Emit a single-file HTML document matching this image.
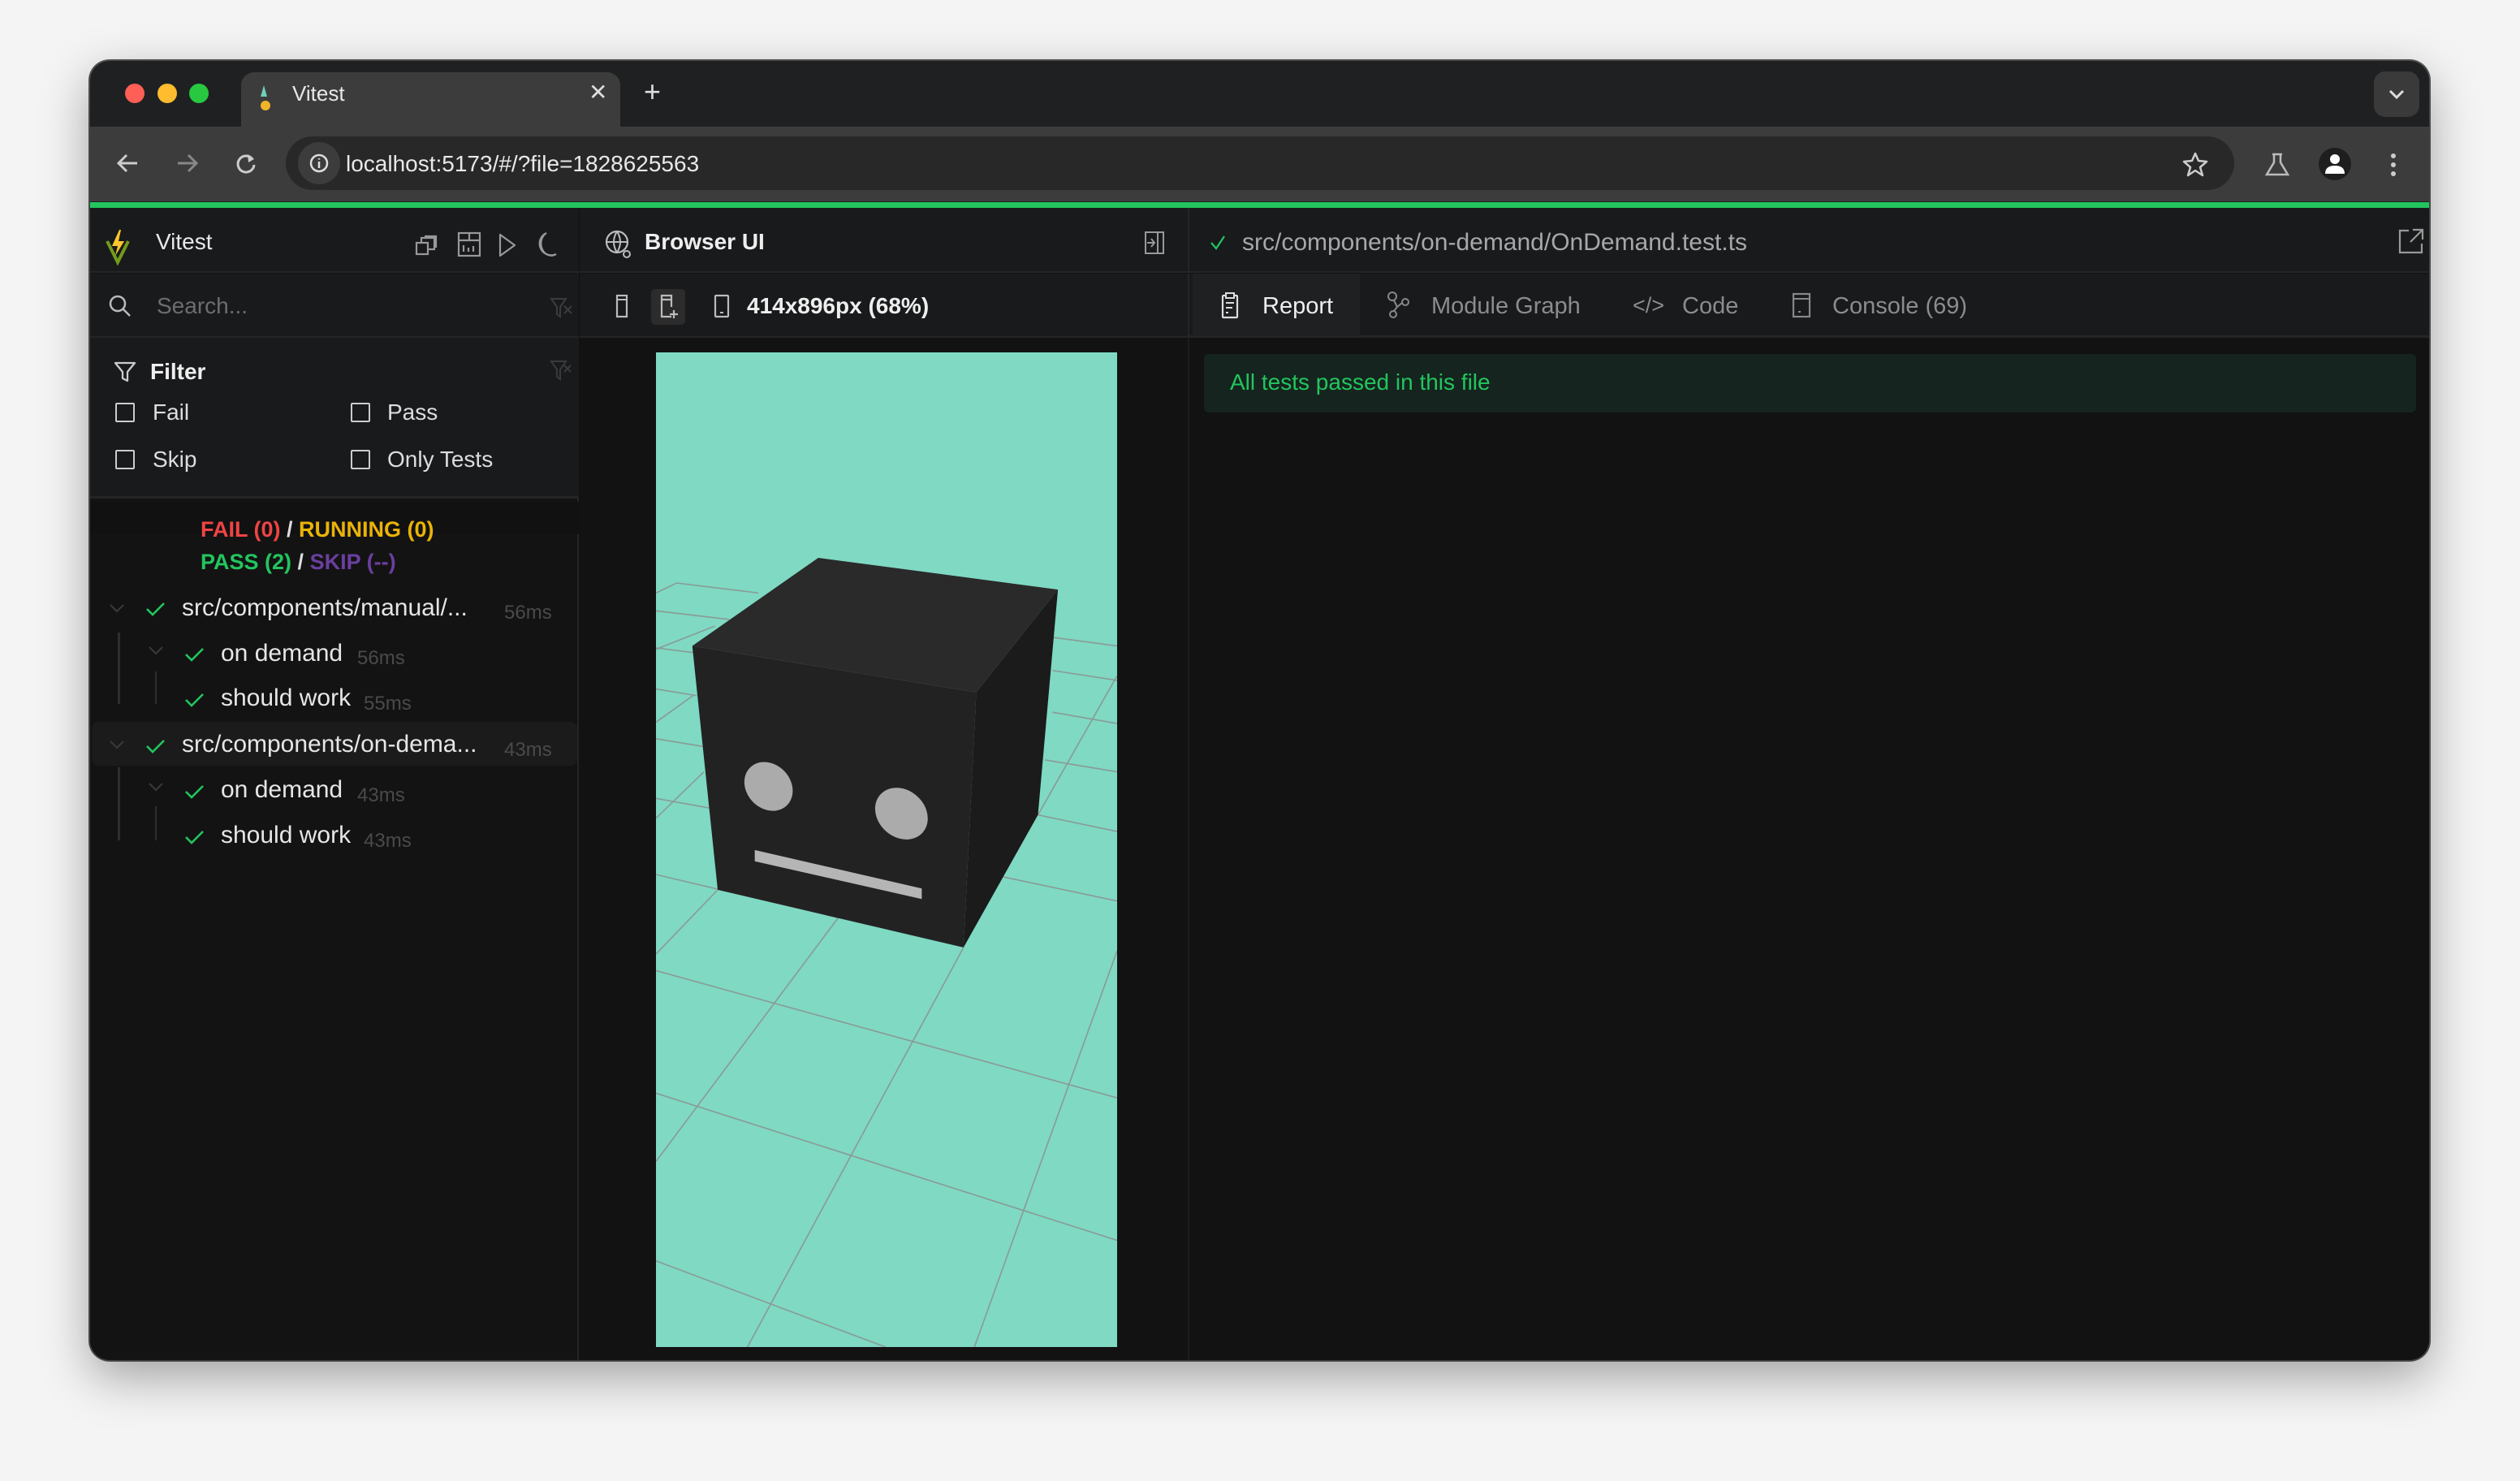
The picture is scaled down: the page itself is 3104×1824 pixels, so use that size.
<!DOCTYPE html>
<html><head><meta charset="utf-8">
<style>
*{box-sizing:border-box;margin:0;padding:0}
html,body{width:3104px;height:1824px;overflow:hidden;background:#f4f4f4;font-family:"Liberation Sans",sans-serif}
.a{position:absolute}
.win{left:111px;top:75px;width:2881px;height:1600px;border-radius:24px;background:#1f2021;overflow:hidden;box-shadow:0 20px 60px rgba(0,0,0,.35),0 0 0 2px #555}
.t{position:absolute;white-space:nowrap;line-height:1}
svg.i{position:absolute;overflow:visible}
.cb{position:absolute;width:24px;height:24px;border:2.5px solid #ccc;border-radius:2px}
</style></head><body>
<div class="a win">
  <div class="a" style="left:43px;top:28px;width:24px;height:24px;border-radius:50%;background:#fe5f57"></div>
  <div class="a" style="left:83px;top:28px;width:24px;height:24px;border-radius:50%;background:#febc2e"></div>
  <div class="a" style="left:122px;top:28px;width:24px;height:24px;border-radius:50%;background:#28c840"></div>
  <div class="a" style="left:186px;top:14px;width:467px;height:70px;background:#3c3c3c;border-radius:16px 16px 0 0"></div>
  <svg class="i" style="left:208px;top:30px" width="20" height="36"><path d="M6 0 L10 14 L2 14Z" fill="#6fd0b5"/><circle cx="8" cy="25" r="6" fill="#f0b429"/></svg>
  <div class="t" style="left:249px;top:27px;font-size:26px;color:#e8e8e8">Vitest</div>
  <div class="t" style="left:614px;top:25px;font-size:28px;color:#ddd">✕</div>
  <div class="t" style="left:682px;top:20px;font-size:36px;color:#ddd">+</div>
  <div class="a" style="left:2813px;top:13px;width:56px;height:56px;border-radius:14px;background:#3a3a3a"></div>
  <svg class="i" style="left:2831px;top:35px" width="20" height="12"><path d="M2 2 L10 10 L18 2" fill="none" stroke="#ddd" stroke-width="3"/></svg>
  <div class="a" style="left:0;top:81px;width:2881px;height:92px;background:#3c3c3c"></div>
  <svg class="i" style="left:32px;top:113px" width="28" height="26"><path d="M26 13 H3 M13 3 L3 13 L13 23" fill="none" stroke="#ccc" stroke-width="3"/></svg>
  <svg class="i" style="left:106px;top:113px" width="28" height="26"><path d="M2 13 H25 M15 3 L25 13 L15 23" fill="none" stroke="#888" stroke-width="3"/></svg>
  <svg class="i" style="left:178px;top:113px" width="28" height="28"><path d="M22 8 A10 10 0 1 0 24 15" fill="none" stroke="#ccc" stroke-width="3"/><path d="M16 2 L24 8 L17 12Z" fill="#ccc"/></svg>
  <div class="a" style="left:241px;top:93px;width:2400px;height:66px;border-radius:33px;background:#282828"></div>
  <div class="a" style="left:256px;top:100px;width:52px;height:52px;border-radius:50%;background:#3c3c3c"></div>
  <svg class="i" style="left:270px;top:114px" width="24" height="24"><circle cx="12" cy="12" r="10" fill="none" stroke="#ddd" stroke-width="2.5"/><path d="M12 10 V18 M12 6 V7.5" stroke="#ddd" stroke-width="2.5"/></svg>
  <div class="t" style="left:315px;top:113px;font-size:28px;color:#e8e8e8">localhost:5173/#/?file=1828625563</div>
  <svg class="i" style="left:2577px;top:112px" width="32" height="30"><path d="M16 2 L20 11 L30 12 L22 19 L25 29 L16 23 L7 29 L10 19 L2 12 L12 11Z" fill="none" stroke="#ccc" stroke-width="2.5" stroke-linejoin="round"/></svg>
  <svg class="i" style="left:2679px;top:113px" width="30" height="30"><path d="M9 2 H21 M11 2 V12 L2 27 H28 L19 12 V2" fill="none" stroke="#bbb" stroke-width="2.5"/></svg>
  <div class="a" style="left:2745px;top:107px;width:40px;height:40px;border-radius:50%;background:#1e1e1e"></div>
  <svg class="i" style="left:2752px;top:113px" width="26" height="28"><circle cx="13" cy="8" r="6" fill="#fff"/><path d="M1 26 Q1 16 13 16 Q25 16 25 26Z" fill="#fff"/></svg>
  <svg class="i" style="left:2832px;top:113px" width="10" height="30"><circle cx="5" cy="4" r="3" fill="#ccc"/><circle cx="5" cy="15" r="3" fill="#ccc"/><circle cx="5" cy="26" r="3" fill="#ccc"/></svg>
  <div class="a" style="left:0;top:174px;width:2881px;height:7px;background:#22c55e"></div>
  <div class="a" style="left:0;top:181px;width:2881px;height:1419px;background:#121212"></div>
  <!-- sidebar -->
  <div class="a" style="left:0;top:181px;width:602px;height:1419px;background:#131313;border-right:2px solid #242424"></div>
  <div class="a" style="left:0;top:181px;width:602px;height:80px;background:#191a1c;border-bottom:2px solid #252525"></div>
  <div class="a" style="left:0;top:262px;width:602px;height:79px;background:#191a1c;border-bottom:2px solid #252525"></div>
  <div class="a" style="left:0;top:341px;width:602px;height:198px;background:#191a1c;border-bottom:3px solid #252525"></div>
  <svg class="i" style="left:19px;top:206px" width="30" height="44"><path d="M2 16 L15 42 L28 16" fill="none" stroke="#729b1b" stroke-width="4"/><path d="M17 2 L8 22 H15 L12 34 L23 16 H16 L19 2Z" fill="#fcc72b"/></svg>
  <div class="t" style="left:81px;top:209px;font-size:28px;color:#e8e8e8">Vitest</div>
  <svg class="i" style="left:400px;top:212px" width="30" height="30"><rect x="2" y="12" width="14" height="14" fill="none" stroke="#999" stroke-width="2.2"/><path d="M8 12 V6 H24 V20 H16 M12 4 H26 V18" fill="none" stroke="#999" stroke-width="2.2"/></svg>
  <svg class="i" style="left:452px;top:210px" width="30" height="32"><rect x="2" y="2" width="26" height="28" fill="none" stroke="#999" stroke-width="2.2"/><path d="M2 11 H28 M15 2 V11 M8 17 V25 M14 20 V25 M20 18 V25" fill="none" stroke="#999" stroke-width="2.2"/></svg>
  <svg class="i" style="left:503px;top:212px" width="22" height="30"><path d="M2 2 L20 15 L2 28Z" fill="none" stroke="#999" stroke-width="2.2" stroke-linejoin="round"/></svg>
  <svg class="i" style="left:548px;top:210px" width="28" height="32"><path d="M14 2 A14 14 0 1 0 26 28 A12 14 0 0 1 14 2Z" fill="none" stroke="#999" stroke-width="2.2"/></svg>
  <svg class="i" style="left:22px;top:287px" width="30" height="30"><circle cx="12" cy="12" r="9" fill="none" stroke="#bbb" stroke-width="2.5"/><path d="M19 19 L27 27" stroke="#bbb" stroke-width="2.5"/></svg>
  <div class="t" style="left:82px;top:288px;font-size:28px;color:#6d6d6d">Search...</div>
  <svg class="i" style="left:566px;top:290px" width="30" height="28"><path d="M2 3 H20 L13 13 V25 L9 22 V13Z M18 12 L27 21 M27 12 L18 21" fill="none" stroke="#3c3c3c" stroke-width="2"/></svg>
  <svg class="i" style="left:29px;top:369px" width="28" height="28"><path d="M2 3 H26 L17 14 V25 L11 22 V14Z" fill="none" stroke="#ccc" stroke-width="2.3" stroke-linejoin="round"/></svg>
  <div class="t" style="left:74px;top:369px;font-size:28px;color:#eee;font-weight:bold">Filter</div>
  <svg class="i" style="left:566px;top:367px" width="30" height="28"><path d="M2 3 H20 L13 13 V25 L9 22 V13Z M18 8 L26 16 M26 8 L18 16" fill="none" stroke="#3a3a3a" stroke-width="2"/></svg>
  <div class="cb" style="left:31px;top:421px"></div><div class="t" style="left:77px;top:419px;font-size:28px;color:#ddd">Fail</div>
  <div class="cb" style="left:321px;top:421px"></div><div class="t" style="left:366px;top:419px;font-size:28px;color:#ddd">Pass</div>
  <div class="cb" style="left:31px;top:479px"></div><div class="t" style="left:77px;top:477px;font-size:28px;color:#ddd">Skip</div>
  <div class="cb" style="left:321px;top:479px"></div><div class="t" style="left:366px;top:477px;font-size:28px;color:#ddd">Only Tests</div>
  <!-- status -->
  <div class="a" style="left:0;top:543px;width:602px;height:40px;background:#111"></div>
  <div class="t" style="left:136px;top:564px;font-size:27px;font-weight:bold;color:#ef4444">FAIL (0) <span style="color:#ddd">/</span> <span style="color:#eab308">RUNNING (0)</span></div>
  <div class="t" style="left:136px;top:604px;font-size:27px;font-weight:bold;color:#22c55e">PASS (2) <span style="color:#ddd">/</span> <span style="color:#6b3fa0">SKIP (--)</span></div>
  <!-- tree -->
  <div class="a" style="left:2px;top:814px;width:598px;height:54px;background:#1b1b1b;border-radius:8px"></div>
  <div class="a" style="left:34px;top:704px;width:3px;height:88px;background:#2e2e2e"></div>
  <div class="a" style="left:80px;top:752px;width:2px;height:40px;background:#2e2e2e"></div>
  <div class="a" style="left:34px;top:870px;width:3px;height:90px;background:#2e2e2e"></div>
  <div class="a" style="left:80px;top:918px;width:2px;height:42px;background:#2e2e2e"></div>
  <svg class="i" style="left:0;top:0" width="602" height="1100">
    <g fill="none" stroke="#3a3a3a" stroke-width="2"><path d="M25 670 L33 678 L41 670"/><path d="M73 722 L81 730 L89 722"/><path d="M25 838 L33 846 L41 838"/><path d="M73 890 L81 898 L89 890"/></g>
    <g fill="none" stroke="#22c55e" stroke-width="2.6"><path d="M70 675 L77 682 L91 668"/><path d="M118 731 L125 738 L139 724"/><path d="M118 787 L125 794 L139 780"/><path d="M70 844 L77 851 L91 837"/><path d="M118 900 L125 907 L139 893"/><path d="M118 956 L125 963 L139 949"/></g>
  </svg>
  <div class="t" style="left:113px;top:659px;font-size:30px;color:#e6e6e6">src/components/manual/...</div>
  <div class="t" style="left:510px;top:668px;font-size:24px;color:#4a4a4a">56ms</div>
  <div class="t" style="left:161px;top:715px;font-size:30px;color:#e6e6e6">on demand</div>
  <div class="t" style="left:329px;top:724px;font-size:24px;color:#4a4a4a">56ms</div>
  <div class="t" style="left:161px;top:770px;font-size:30px;color:#e6e6e6">should work</div>
  <div class="t" style="left:337px;top:780px;font-size:24px;color:#4a4a4a">55ms</div>
  <div class="t" style="left:113px;top:827px;font-size:30px;color:#e6e6e6">src/components/on-dema...</div>
  <div class="t" style="left:510px;top:837px;font-size:24px;color:#4a4a4a">43ms</div>
  <div class="t" style="left:161px;top:883px;font-size:30px;color:#e6e6e6">on demand</div>
  <div class="t" style="left:329px;top:893px;font-size:24px;color:#4a4a4a">43ms</div>
  <div class="t" style="left:161px;top:939px;font-size:30px;color:#e6e6e6">should work</div>
  <div class="t" style="left:337px;top:949px;font-size:24px;color:#4a4a4a">43ms</div>
  <!-- middle panel -->
  <div class="a" style="left:603px;top:181px;width:751px;height:80px;background:#191a1c;border-bottom:2px solid #252525;border-right:2px solid #252525"></div>
  <div class="a" style="left:603px;top:262px;width:751px;height:79px;background:#191a1c;border-bottom:2px solid #252525;border-right:2px solid #252525"></div>
  <div class="a" style="left:1352px;top:341px;width:2px;height:1259px;background:#1c1c1c"></div>
  <svg class="i" style="left:634px;top:207px" width="34" height="38"><circle cx="15" cy="16" r="13" fill="none" stroke="#bbb" stroke-width="2.2"/><path d="M2 16 H28 M15 3 Q7 16 15 29 M15 3 Q23 16 15 29" fill="none" stroke="#bbb" stroke-width="2"/><circle cx="27" cy="31" r="4" fill="#191a1c" stroke="#bbb" stroke-width="2"/></svg>
  <div class="t" style="left:683px;top:209px;font-size:28px;color:#eee;font-weight:bold">Browser UI</div>
  <svg class="i" style="left:1298px;top:209px" width="26" height="30"><rect x="2" y="2" width="22" height="26" fill="none" stroke="#999" stroke-width="2"/><path d="M17 2 V28 M4 15 H13 M9 10 L13 15 L9 20" fill="none" stroke="#999" stroke-width="2"/></svg>
  <svg class="i" style="left:647px;top:287px" width="16" height="30"><rect x="2" y="2" width="12" height="26" fill="none" stroke="#bbb" stroke-width="2.2"/><path d="M2 7 H14" stroke="#bbb" stroke-width="2"/></svg>
  <div class="a" style="left:691px;top:281px;width:42px;height:44px;background:#2c2c2c;border-radius:5px"></div>
  <svg class="i" style="left:702px;top:287px" width="22" height="32"><path d="M14 28 H2 V2 H14 V16 M2 7 H14 M17 20 V30 M12 25 H22" fill="none" stroke="#bbb" stroke-width="2.2"/></svg>
  <svg class="i" style="left:768px;top:287px" width="20" height="30"><rect x="2" y="2" width="16" height="26" rx="1" fill="none" stroke="#bbb" stroke-width="2.2"/><path d="M8 23 H12" stroke="#bbb" stroke-width="2"/></svg>
  <div class="t" style="left:809px;top:288px;font-size:28px;color:#eee;font-weight:bold">414x896px (68%)</div>
  <!-- canvas -->
  <div class="a" style="left:697px;top:359px;width:568px;height:1225px;background:#7fd9c3;overflow:hidden">
    <svg width="568" height="1225" viewBox="198 17 1270 1501" preserveAspectRatio="none" style="display:block">
      <g stroke="#8a9a95" stroke-width="1.6" fill="none">
        <path vector-effect="non-scaling-stroke" d="M198 950 L1468 1142 M198 1135 L1468 1357 M198 1388 L830 1518 M198 805 L700 870 M1150 808 L1468 845 M198 690 L400 710 M1250 715 L1468 740 M198 600 L330 612 M1270 632 L1468 650 M198 525 L310 535 M1290 560 L1468 577 M198 463 L300 470 M1290 497 L1468 512 M198 407 L400 420 M1290 447 L1468 460 M198 380 L255 365 L480 380"/>
        <path vector-effect="non-scaling-stroke" d="M1468 920 L1075 1518 M1045 915 L450 1518 M1468 505 L1250 715 M700 870 L198 1238 M368 828 L198 925 M330 650 L198 720 M300 535 L198 575 M360 430 L198 465"/>
      </g>
      <path d="M645 327 L1305 375 L1080 530 L298 460Z" fill="#2a2a2a"/>
      <path d="M298 460 L1080 530 L1045 915 L368 828Z" fill="#222"/>
      <path d="M1080 530 L1305 375 L1250 715 L1045 915Z" fill="#1b1b1b"/>
      <ellipse cx="508" cy="672" rx="67" ry="36" transform="rotate(8 508 672)" fill="#ababab"/>
      <ellipse cx="874" cy="713" rx="73" ry="38" transform="rotate(8 874 713)" fill="#ababab"/>
      <path d="M470 768 L930 826 L930 842 L470 785Z" fill="#b5b5b5"/>
    </svg>
  </div>
  <!-- right panel -->
  <div class="a" style="left:1354px;top:181px;width:1527px;height:80px;background:#191a1c;border-bottom:2px solid #252525"></div>
  <div class="a" style="left:1354px;top:262px;width:1527px;height:79px;background:#191a1c;border-bottom:3px solid #252525"></div>
  <div class="a" style="left:1358px;top:262px;width:206px;height:77px;background:#1f2022"></div>
  <svg class="i" style="left:1379px;top:213px" width="20" height="22"><path d="M2 11 L8 18 L18 3" fill="none" stroke="#22c55e" stroke-width="2.2"/></svg>
  <div class="t" style="left:1419px;top:209px;font-size:30px;color:#a8a8a8">src/components/on-demand/OnDemand.test.ts</div>
  <svg class="i" style="left:2842px;top:205px" width="34" height="34"><path d="M14 4 H3 V31 H30 V20 M19 3 H31 V15 M31 3 L16 18" fill="none" stroke="#999" stroke-width="2.2"/></svg>
  <svg class="i" style="left:1393px;top:284px" width="22" height="34"><rect x="2" y="5" width="18" height="27" rx="1" fill="none" stroke="#ddd" stroke-width="2.2"/><rect x="6" y="2" width="10" height="6" fill="#1f2022" stroke="#ddd" stroke-width="2"/><path d="M6 14 H16 M6 20 H14 M6 26 H9" stroke="#ddd" stroke-width="2"/></svg>
  <div class="t" style="left:1444px;top:288px;font-size:29px;color:#eee">Report</div>
  <svg class="i" style="left:1597px;top:283px" width="30" height="36"><circle cx="7" cy="7" r="5" fill="none" stroke="#888" stroke-width="2"/><circle cx="23" cy="14" r="4" fill="none" stroke="#888" stroke-width="2"/><circle cx="8" cy="29" r="4" fill="none" stroke="#888" stroke-width="2"/><path d="M9 12 L13 20 L19 15 M13 20 L9 25" fill="none" stroke="#888" stroke-width="2"/></svg>
  <div class="t" style="left:1652px;top:288px;font-size:29px;color:#8c8c8c">Module Graph</div>
  <div class="t" style="left:1900px;top:288px;font-size:27px;color:#8c8c8c">&lt;/&gt;</div>
  <div class="t" style="left:1961px;top:288px;font-size:29px;color:#8c8c8c">Code</div>
  <svg class="i" style="left:2096px;top:285px" width="24" height="32"><rect x="2" y="2" width="20" height="28" fill="none" stroke="#888" stroke-width="2.2"/><path d="M2 8 H22 M8 24 H11" stroke="#888" stroke-width="2"/></svg>
  <div class="t" style="left:2146px;top:288px;font-size:29px;color:#8c8c8c">Console (69)</div>
  <div class="a" style="left:1372px;top:361px;width:1493px;height:72px;background:#15241e;border-radius:6px"></div>
  <div class="t" style="left:1404px;top:382px;font-size:28px;color:#22c55e">All tests passed in this file</div>
</div>
</body></html>
